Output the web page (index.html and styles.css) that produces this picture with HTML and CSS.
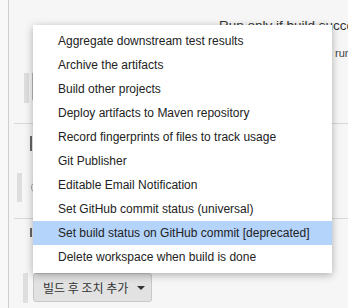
FILE: index.html
```html
<!DOCTYPE html>
<html>
<head>
<meta charset="utf-8">
<link rel="stylesheet" href="styles.css">
</head>
<body>
<div class="frame">
  <section class="sec sec1">
    <div class="cond-label">Run only if build succeeds</div>
    <div class="cond-desc">running</div>
    <div class="field-row">
      <span class="grip"></span>
      <span class="field"></span>
    </div>
  </section>
  <section class="sec sec2">
    <span class="mark"></span>
    <div class="check-row">
      <span class="grip grip-b"></span>
      <span class="round"></span>
    </div>
  </section>
  <section class="sec sec3">
    <span class="mark mark-b"></span>
    <div class="btn-row">
      <span class="grip grip-c"></span>
      <button class="add-btn">빌드 후 조치 추가 <span class="caret"></span></button>
    </div>
  </section>
</div>
<ul class="menu">
  <li class="item">Aggregate downstream test results</li>
  <li class="item">Archive the artifacts</li>
  <li class="item">Build other projects</li>
  <li class="item">Deploy artifacts to Maven repository</li>
  <li class="item">Record fingerprints of files to track usage</li>
  <li class="item">Git Publisher</li>
  <li class="item">Editable Email Notification</li>
  <li class="item">Set GitHub commit status (universal)</li>
  <li class="item active">Set build status on GitHub commit [deprecated]</li>
  <li class="item">Delete workspace when build is done</li>
</ul>
</body>
</html>
```

FILE: styles.css
```css
html, body {
  margin: 0;
  padding: 0;
  width: 348px;
  height: 308px;
  overflow: hidden;
  background: #f8f8f8;
  font-family: "Liberation Sans", Arial, sans-serif;
  color: #333;
}

.frame {
  margin-left: 8px;
  border-left: 1px solid #cfcfcf;
  background: #f6f6f6;
  height: 308px;
  box-sizing: border-box;
}

.sec {
  margin-left: 5px;
  border-bottom: 1px solid #d8d8d8;
  box-sizing: border-box;
}

.sec1 {
  height: 124px;
  padding-top: 18px;
}

.cond-label {
  padding-left: 205px;
  font-size: 13.5px;
  line-height: 16px;
  white-space: nowrap;
  color: #333;
}

.cond-desc {
  margin-top: 12px;
  padding-left: 321px;
  font-size: 11px;
  line-height: 14px;
  white-space: nowrap;
  color: #444;
}

.field-row {
  margin-top: 13px;
  display: flex;
  align-items: flex-start;
}

.grip {
  display: block;
  width: 5px;
  height: 30px;
  margin-left: 10px;
  background: #dedede;
}

.field {
  display: block;
  margin-left: 3px;
  width: 40px;
  height: 27px;
  border-left: 1px solid #b8b8b8;
}

.sec2 {
  height: 95px;
  padding-top: 12px;
}

.mark {
  display: block;
  margin-left: 16px;
  width: 2px;
  height: 15px;
  background: #666;
}

.check-row {
  margin-top: 22px;
  display: flex;
  align-items: center;
}

.grip-b {
  margin-left: 3px;
  height: 29px;
}

.round {
  display: block;
  margin-left: 9px;
  width: 10px;
  height: 9px;
  border: 1px solid #aaa;
  border-radius: 5px;
}

.sec3 {
  border-bottom: none;
  padding-top: 9px;
}

.mark-b {
  margin-left: 16px;
  height: 9px;
}

.btn-row {
  margin-top: 36px;
  display: flex;
  align-items: flex-start;
}

.grip-c {
  margin-left: 9px;
  height: 30px;
}

.add-btn {
  margin-left: 5px;
  height: 29px;
  width: 119px;
  padding: 0 0 0 9px;
  border: 1px solid #c8c8c8;
  border-radius: 3px;
  background: #e2e2e2;
  font-family: "Noto Sans CJK KR", "Liberation Sans", sans-serif;
  font-size: 12px;
  color: #333;
  text-align: left;
  display: flex;
  align-items: center;
  box-sizing: border-box;
}

.caret {
  display: inline-block;
  margin-left: 9px;
  width: 0;
  height: 0;
  border-left: 4px solid transparent;
  border-right: 4px solid transparent;
  border-top: 4px solid #333;
}

.menu {
  position: absolute;
  left: 33px;
  top: 25px;
  width: 299px;
  margin: 0;
  padding: 4px 0;
  list-style: none;
  background: #fff;
  box-shadow: 0 2px 8px rgba(0, 0, 0, 0.3);
}

.item {
  height: 24px;
  line-height: 24px;
  padding-left: 25px;
  font-size: 12px;
  color: #222;
  white-space: nowrap;
}

.item.active {
  background: #b4d4fc;
}
```
